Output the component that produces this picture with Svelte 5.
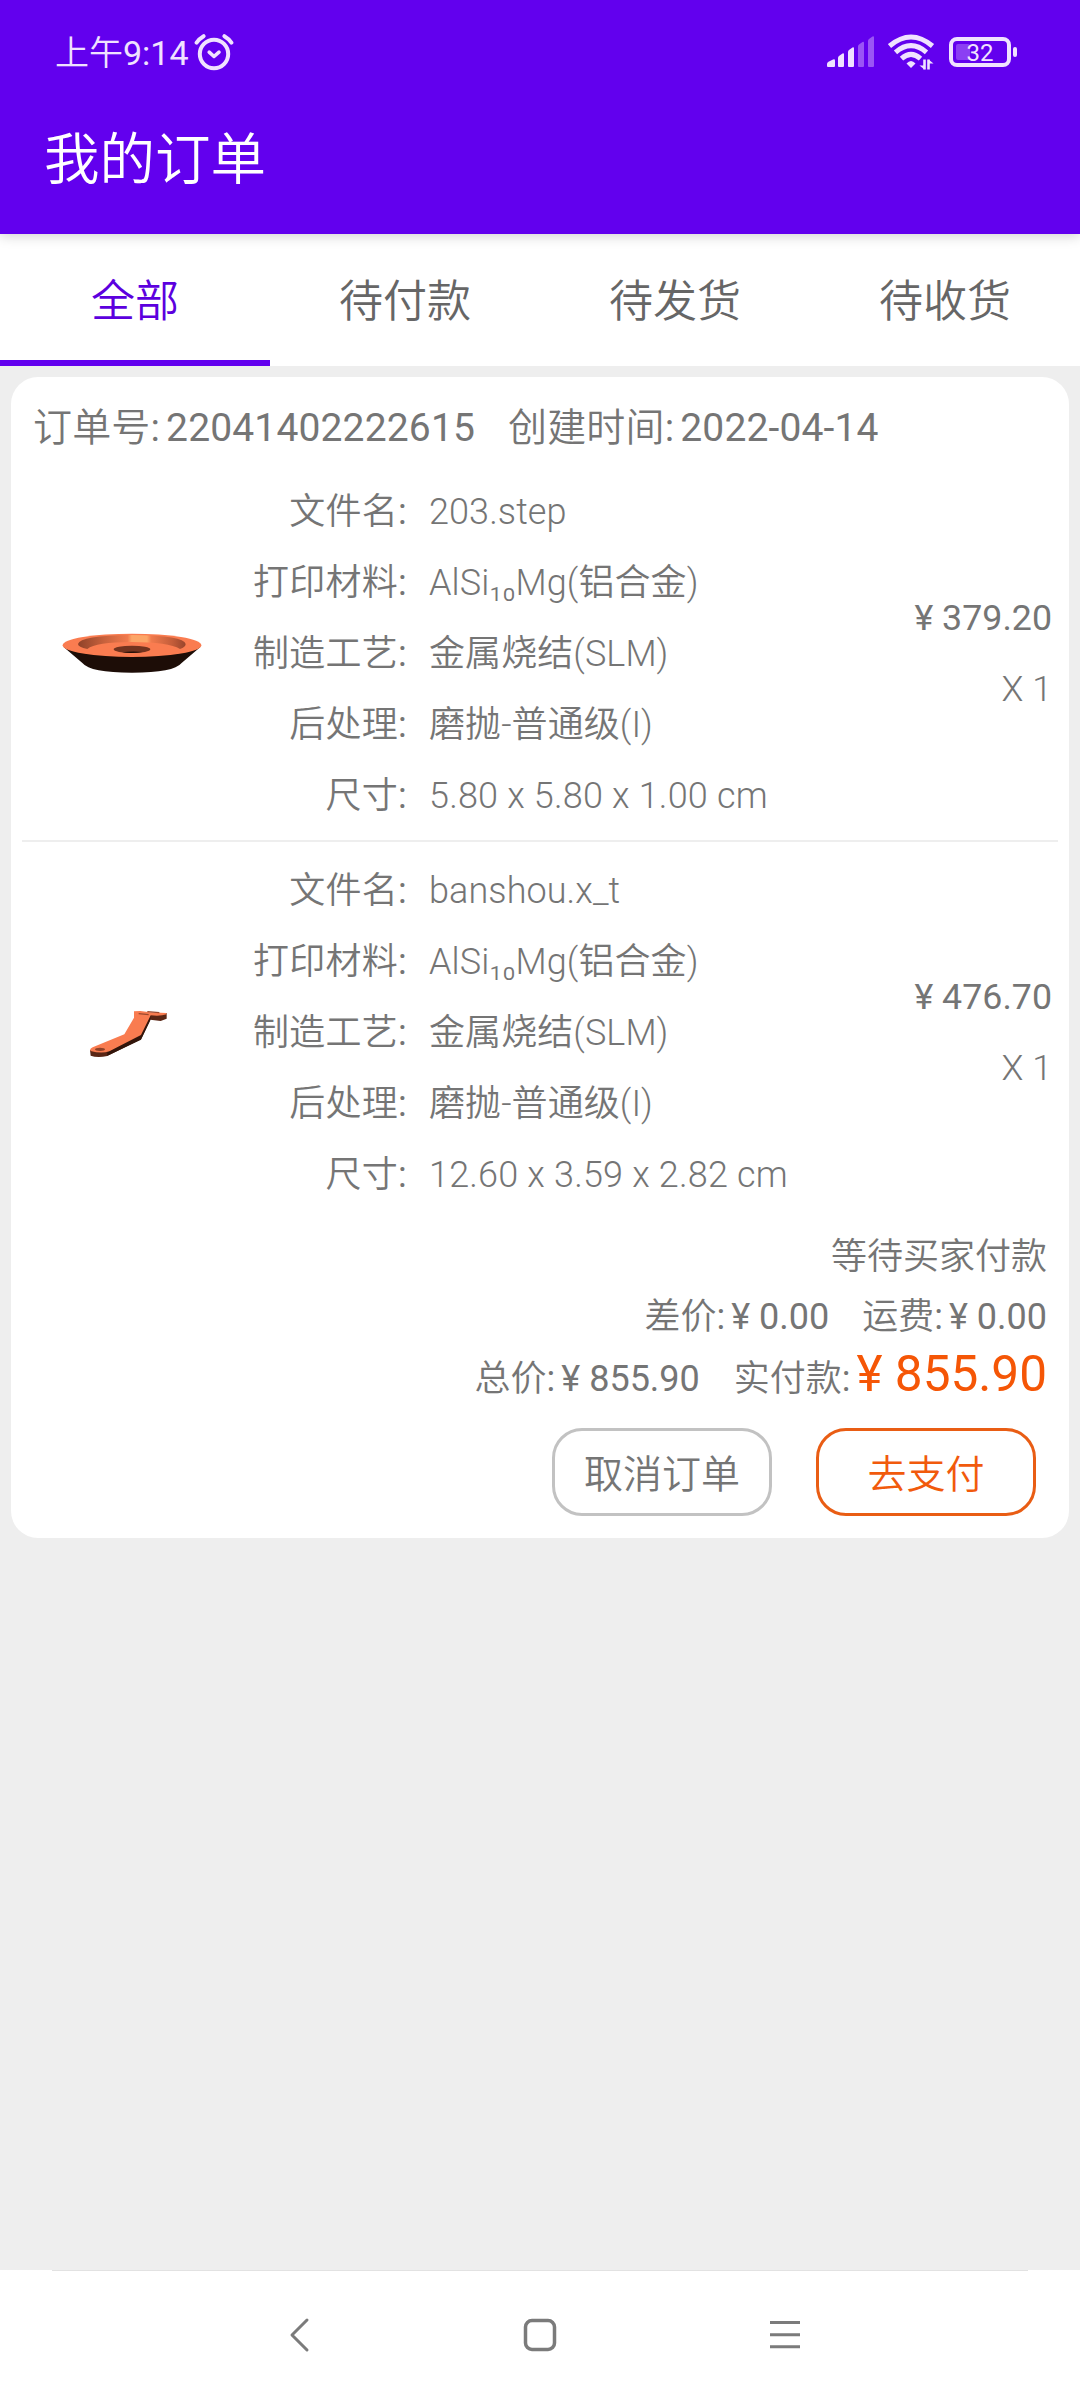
<script lang="ts">
	/** Labels of the order state tabs */
	const tabs = ['全部', '待付款', '待发货', '待收货'];
	/** Index of the selected tab */
	let active = $state(0);

	/** Files that are part of the order */
	const items = [
		{ kind: 'disc', name: '203.step', size: '5.80 x 5.80 x 1.00 cm', price: '379.20', count: 1 },
		{ kind: 'wrench', name: 'banshou.x_t', size: '12.60 x 3.59 x 2.82 cm', price: '476.70', count: 1 }
	];
</script>

<div class="screen">
	<header>
		<div class="status">
			<div class="clock">
				<span><b>上午</b>9:14</span>
				<svg class="alarm" width="40" height="40" viewBox="0 0 40 40" fill="none" stroke="#f0e2ff" stroke-linecap="round">
					<circle cx="20" cy="22" r="14.2" stroke-width="4" />
					<path d="M15.2 20.2l4.8 4.3 5-4.3" stroke-width="3.6" stroke-linejoin="round" />
					<path d="M2.6 10.6Q5.5 6.6 9.6 4.2M37.4 10.6Q34.5 6.6 30.4 4.2" stroke-width="4" />
				</svg>
			</div>
			<div class="signals">
				<svg width="50" height="34" viewBox="0 0 50 34" fill="#f0e2ff">
					<path d="M0 31v-2q0-1.500 1.500-2.300l4.500-2.200q2-.6 2 1V31q0 1-1 1H1q-1 0-1-1z" />
					<path d="M11 31v-8q0-1.500 1.300-2.300l3.200-2.200q1.500-.6 1.500 1V31q0 1-1 1h-4q-1 0-1-1z" />
					<path d="M21 31V17q0-1.500 1.300-2.300l3.200-2.200q1.500-.6 1.500 1V31q0 1-1 1h-4q-1 0-1-1z" />
					<g fill="#9a55f5">
						<path d="M31 31V11.500q0-1.500 1.300-2.300l3.200-2.200q1.500-.6 1.500 1V31q0 1-1 1h-4q-1 0-1-1z" />
						<path d="M41 31V6q0-1.500 1.300-2.300l3.200-2.200q1.500-.6 1.500 1V31q0 1-1 1h-4q-1 0-1-1z" />
					</g>
				</svg>
				<svg class="wifi" width="48" height="38" viewBox="0 0 48 38" fill="none" stroke="#f0e2ff" stroke-width="5">
					<path d="M1.500 13Q23 -5 44.500 13" />
					<path d="M7.500 19.300Q23 6 38.500 19.300" />
					<path d="M13.500 25.600Q23 17 32.500 25.600" />
					<path d="M18.500 30.500Q23 25.500 27.500 30.500L23 35z" fill="#f0e2ff" stroke="none" />
					<path d="M36.500 26.500v10M40.500 26.500v10" stroke-width="2.600" />
					<path d="M31.500 32.500h5v4zM45.500 30.500h-5v-4z" fill="#f0e2ff" stroke="none" />
				</svg>
				<div class="battery"><i></i><span>32</span></div>
				<div class="nub"></div>
			</div>
		</div>
		<h1>我的订单</h1>
	</header>

	<nav class="tabs">
		{#each tabs as tab, i}
			<button class:active={i === active} onclick={() => (active = i)}>{tab}</button>
		{/each}
	</nav>

	<main>
		<section class="card">
			<div class="order">
				<span><b>订单号</b>:</span><span class="val">22041402222615</span>
				<span class="next"><b>创建时间</b>:</span><span class="val">2022-04-14</span>
			</div>

			{#each items as item}
				<div class="item">
					<div class="thumb">
						{#if item.kind === 'disc'}
							<svg width="180" height="100" viewBox="0 0 540 300">
								<defs>
									<linearGradient id="wall">
										<stop offset="0" stop-color="#8f4229" />
										<stop offset="0.25" stop-color="#c9623d" />
										<stop offset="0.46" stop-color="#f07a4d" />
										<stop offset="0.5" stop-color="#fca668" />
										<stop offset="0.64" stop-color="#fca668" />
										<stop offset="0.68" stop-color="#f07a4d" />
										<stop offset="0.88" stop-color="#c25c39" />
										<stop offset="1" stop-color="#98452c" />
									</linearGradient>
								</defs>
								<path d="M70 140L128 190Q150 218 276 218T424 190L482 140z" fill="#1d0d07" />
								<ellipse cx="276" cy="136" rx="208" ry="35" fill="#fa7c50" />
								<path d="M114 132Q120 106 276 105Q432 106 437 132Q437 141 420 147Q385 126 276 126Q167 126 142 147Q114 141 114 132z" fill="url(#wall)" />
								<ellipse cx="276" cy="148" rx="55" ry="11" fill="#74341f" />
								<path d="M246 157Q276 153 308 156Q276 161 246 157z" fill="#210e07" />
							</svg>
						{:else}
							<svg width="120" height="100" viewBox="0 0 360 300">
								<path d="M60 213L62 230Q82 237 112 231L213 181L241 122L272 126L290 119V102H240L211 166L118 215z" fill="#5a2615" />
								<path d="M112 219V230L213 182L241 124V110L211 166z" fill="#32150b" />
								<path d="M192 97L211 96L240 100L289 102L290 106Q272 112 242 109L213 168L118 217Q94 225 62 216Q57 210 68 205L163 166L192 116z" fill="#f97c50" />
								<ellipse cx="90" cy="211" rx="15" ry="5" fill="#8d4128" />
								<path d="M206 104l30 3M232 98l36 3" stroke="#9a482d" stroke-width="4" />
							</svg>
						{/if}
					</div>
					<dl>
						<dt><b>文件名</b>:</dt><dd>{item.name}</dd>
						<dt><b>打印材料</b>:</dt><dd>AlSi₁₀Mg(<b>铝合金</b>)</dd>
						<dt><b>制造工艺</b>:</dt><dd><b>金属烧结</b>(SLM)</dd>
						<dt><b>后处理</b>:</dt><dd><b>磨抛</b>-<b>普通级</b>(I)</dd>
						<dt><b>尺寸</b>:</dt><dd class="size">{item.size}</dd>
					</dl>
					<div class="price">
						<span>¥ {item.price}</span>
						<span class="count">X {item.count}</span>
					</div>
				</div>
			{/each}

			<div class="summary">
				<div class="state"><b>等待买家付款</b></div>
				<div class="line">
					<span><b>差价</b>:</span><span class="val">¥ 0.00</span>
					<span class="next"><b>运费</b>:</span><span class="val">¥ 0.00</span>
				</div>
				<div class="line total">
					<span><b>总价</b>:</span><span class="val">¥ 855.90</span>
					<span class="next"><b>实付款</b>:</span><span class="val paid">¥ 855.90</span>
				</div>
			</div>

			<div class="actions">
				<button>取消订单</button>
				<button class="pay">去支付</button>
			</div>
		</section>
	</main>

	<footer>
		<svg width="1080" height="130" viewBox="0 0 1080 130" fill="none" stroke="#7b7b7b" stroke-width="3">
			<path d="M52 .5H1028" stroke="#e2e2e2" stroke-width="1" />
			<path d="M307 50L292 65L307 80" stroke-linecap="round" stroke-linejoin="round" />
			<rect x="525.500" y="50.500" width="29" height="29" rx="6.500" stroke-width="3.500" />
			<path d="M770 52.500h30M770 64.700h30M770 76.700h30" />
		</svg>
	</footer>
</div>

<style>
	:global(body) {
		margin: 0;
		background: #eeeeee;
	}
	.screen {
		display: flex;
		flex-direction: column;
		width: 1080px;
		height: 2400px;
		background: #eeeeee;
		color: #757575;
		font-family: Roboto, "Noto Sans CJK SC", sans-serif;
		font-size: 36px;
	}
	/* Chinese glyphs are set one step lighter than the digits beside them */
	b {
		font-weight: 350;
	}
	button {
		font-family: inherit;
		font-weight: 350;
		padding: 0;
		cursor: pointer;
	}
	header {
		position: relative;
		z-index: 1;
		box-sizing: border-box;
		height: 234px;
		background: #6200ee;
		box-shadow: 0 2px 12px rgba(0, 0, 0, 0.18);
	}
	.status {
		display: flex;
		justify-content: space-between;
		height: 104px;
		padding: 0 63px 0 55px;
		color: #f0e2ff;
	}
	.clock, .signals {
		display: flex;
		align-items: center;
	}
	.clock {
		font-size: 34px;
		line-height: 106px;
	}
	.clock span {
		padding-top: 1px;
	}
	.alarm {
		margin-left: 5px;
		margin-bottom: 1px;
	}
	.wifi {
		margin-left: 11px;
	}
	.battery {
		position: relative;
		box-sizing: border-box;
		width: 62px;
		height: 30px;
		margin-left: 13px;
		border: 4px solid #f0e2ff;
		border-radius: 8px;
		font-size: 24px;
		font-weight: 400;
		line-height: 25px;
		text-align: center;
	}
	.battery i {
		position: absolute;
		left: 3px;
		top: 3px;
		width: 14px;
		height: 16px;
		border-radius: 2px;
		background: #8b3ff3;
	}
	.battery span {
		position: relative;
	}
	.nub {
		width: 4px;
		height: 10px;
		margin-left: 2px;
		border-radius: 2px;
		background: #f0e2ff;
	}
	h1 {
		margin: 0 0 0 44px;
		color: #ffffff;
		font-size: 55.5px;
		font-weight: 350;
		line-height: 114px;
	}
	.tabs {
		display: grid;
		grid-template-columns: repeat(4, 1fr);
		height: 132px;
		background: #ffffff;
	}
	.tabs button {
		padding-top: 2px;
		border: 0;
		border-bottom: 6px solid transparent;
		background: none;
		color: #666666;
		font-size: 44px;
	}
	.tabs .active {
		border-color: #6200ee;
		color: #5c00de;
	}
	main {
		flex: 1;
		padding: 11px;
	}
	.card {
		box-sizing: border-box;
		height: 1161px;
		padding: 0 11px;
		border-radius: 27px;
		background: #ffffff;
	}
	.order {
		display: flex;
		height: 86px;
		padding-left: 11px;
		font-size: 39px;
		letter-spacing: 0.15px;
		line-height: 103px;
	}
	.val {
		margin-left: 6px;
	}
	.next {
		margin-left: 33px;
	}
	.item {
		display: grid;
		grid-template-columns: 216px 1fr auto;
		padding: 11px 6px 11px 0;
	}
	.item + .item {
		border-top: 2px solid #eeeeee;
	}
	.thumb {
		display: flex;
		align-items: center;
		justify-content: center;
		padding-bottom: 3px;
	}
	dl {
		display: grid;
		grid-template-columns: 169px 1fr;
		grid-auto-rows: 71px;
		column-gap: 22px;
		margin: 0;
		line-height: 77px;
		white-space: nowrap;
	}
	dt {
		letter-spacing: 0.25px;
		text-align: right;
	}
	dd {
		margin: 0;
		font-weight: 300;
		letter-spacing: 0.08px;
	}
	.size {
		letter-spacing: 0.18px;
	}
	.price {
		display: grid;
		grid-auto-rows: 71px;
		align-content: center;
		font-size: 35.75px;
		line-height: 75px;
		text-align: right;
	}
	.count {
		font-weight: 300;
	}
	.summary {
		padding: 4px 11px 0 0;
		text-align: right;
	}
	.state {
		height: 60px;
		line-height: 68px;
	}
	.line {
		display: flex;
		align-items: baseline;
		justify-content: flex-end;
		height: 61px;
		line-height: 68px;
	}
	.total {
		padding-top: 1px;
	}
	.total .next {
		margin-left: 34px;
	}
	.paid {
		color: #f55606;
		font-size: 49.5px;
		line-height: 58px;
	}
	.actions {
		display: flex;
		justify-content: flex-end;
		gap: 44px;
		margin-top: 22px;
		padding-right: 22px;
	}
	.actions button {
		box-sizing: border-box;
		width: 220px;
		height: 88px;
		padding-bottom: 3px;
		border: 3px solid #c2c2c2;
		border-radius: 30px;
		background: #ffffff;
		color: #757575;
		font-size: 39px;
	}
	.actions .pay {
		border-color: #e95d14;
		color: #f15a0c;
	}
	footer {
		height: 130px;
		background: #ffffff;
	}
	footer svg {
		display: block;
	}
</style>
